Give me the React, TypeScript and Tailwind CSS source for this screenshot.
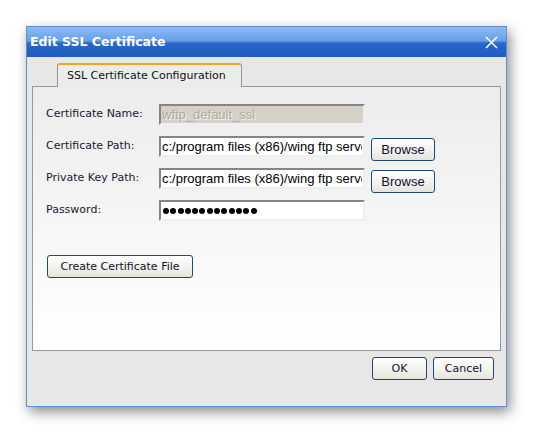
import React from "react";

const btn =
  "h-[23px] rounded-[3px] border border-[#1c4a78] bg-[linear-gradient(to_bottom,#ffffff_0%,#f4f3ee_50%,#e6e4da_100%)] text-[#101030] leading-none flex items-center justify-center";

const inputBox =
  "w-[206px] h-[21px] border-2 border-t-[#858585] border-l-[#858585] border-b-[#efefef] border-r-[#efefef] flex items-center overflow-hidden whitespace-nowrap";

const inputText =
  "w-full h-full outline-none bg-transparent text-[13px] px-[1px] text-black";

function Row({ label, children }: { label: string; children: React.ReactNode }) {
  return (
    <div className="flex items-start h-[21px]">
      <div className="w-[113px] h-[21px] flex items-center text-[11px] text-[#1a1a30]">
        {label}
      </div>
      {children}
    </div>
  );
}

export default function App() {
  const dots = Array.from({ length: 13 });
  const arial = { fontFamily: '"Liberation Sans", Arial, sans-serif' };
  return (
    <div
      className="w-[534px] h-[434px] bg-white pt-[26px] pl-[26px]"
      style={{ fontFamily: '"DejaVu Sans", sans-serif' }}
    >
      <div className="w-[481px] h-[381px] border border-[#5f8fd2] bg-[#e7e7e7] flex flex-col shadow-[3px_5px_12px_rgba(0,0,0,0.45)]">
        {/* Title bar */}
        <div className="h-[30px] shrink-0 bg-[linear-gradient(to_bottom,#8bbcf3_0%,#67a0e8_45%,#2966c6_55%,#1f5dbf_100%)] flex items-center justify-between pl-[3px] pr-[8px]">
          <span className="text-white font-bold text-[12.5px]">Edit SSL Certificate</span>
          <svg width="13" height="13" viewBox="0 0 13 13">
            <path d="M1 1 L12 12 M12 1 L1 12" stroke="white" strokeWidth="1.6" />
          </svg>
        </div>
        {/* Body */}
        <div className="flex-1 flex flex-col px-[5px] pt-[6px]">
          <div className="flex pl-[25px]">
            <div className="w-[185px] h-[24px] -mb-px relative z-10 rounded-t-[3px] border border-[#8f9596] border-b-0 border-t-2 border-t-[#f2a22a] bg-[#ececec] flex items-center pl-[9px] text-[11px] text-[#101020]">
              SSL Certificate Configuration
            </div>
          </div>
          <div className="h-[265px] border border-[#959a9b] bg-[linear-gradient(to_bottom,#ececec_0%,#ffffff_100%)] pl-[13px] pt-[17px] flex flex-col">
            <div className="flex flex-col gap-[11px]">
              <Row label="Certificate Name:">
                <div className={inputBox + " bg-[#d5d1c9]"}>
                  <input
                    readOnly
                    disabled
                    value="wftp_default_ssl"
                    className="w-full h-full outline-none bg-transparent text-[13px] px-[1px] text-[#aeaaa2]"
                    style={{ ...arial, textShadow: "1px 1px 0 #f4f2ee" }}
                  />
                </div>
              </Row>
              <Row label="Certificate Path:">
                <div className={inputBox + " bg-white"}>
                  <input
                    readOnly
                    value="c:/program files (x86)/wing ftp server/ssl/wftp_default_ssl.crt"
                    className={inputText}
                    style={arial}
                  />
                </div>
                <button className={btn + " w-[64px] ml-[6px] mt-[2px] text-[13px]"} style={arial}>
                  Browse
                </button>
              </Row>
              <Row label="Private Key Path:">
                <div className={inputBox + " bg-white"}>
                  <input
                    readOnly
                    value="c:/program files (x86)/wing ftp server/ssl/wftp_default_ssl.key"
                    className={inputText}
                    style={arial}
                  />
                </div>
                <button className={btn + " w-[64px] ml-[6px] mt-[2px] text-[13px]"} style={arial}>
                  Browse
                </button>
              </Row>
              <Row label="Password:">
                <div className={inputBox + " bg-white pl-[2px] gap-[1.3px]"}>
                  {dots.map((_, i) => (
                    <div key={i} className="w-[6px] h-[6px] rounded-full bg-black shrink-0" />
                  ))}
                </div>
              </Row>
            </div>
            <div className="mt-[34px] pl-[1px]">
              <button className={btn + " w-[146px] text-[11px]"}>Create Certificate File</button>
            </div>
          </div>
          <div className="flex justify-end gap-[6px] pt-[6px] pr-[7px]">
            <button className={btn + " w-[55px] text-[11px]"}>OK</button>
            <button className={btn + " w-[61px] text-[11px]"}>Cancel</button>
          </div>
        </div>
      </div>
    </div>
  );
}
